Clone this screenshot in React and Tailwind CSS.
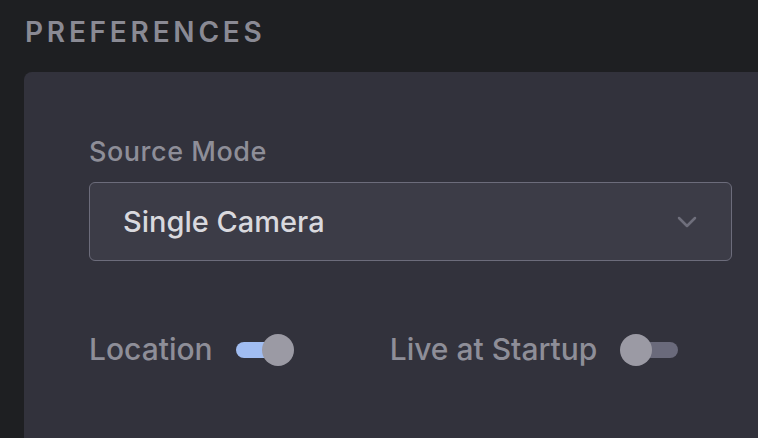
import React, { useState } from 'react';

function Toggle({ on, onChange }) {
  return (
    <button
      onClick={() => onChange(!on)}
      className="relative w-[58px] h-[32px] flex items-center"
    >
      <span className={`absolute left-0 right-0 h-[16px] rounded-full ${on ? 'bg-[#a1bdf1] mr-[2px]' : 'bg-[#6a6a7b] ml-[2px]'}`} />
      <span className={`absolute top-0 w-[32px] h-[32px] rounded-full bg-[#9b9aa4] ${on ? 'right-0' : 'left-0'}`} />
    </button>
  );
}

export default function App() {
  const [location, setLocation] = useState(true);
  const [live, setLive] = useState(false);

  return (
    <div
      className="w-[758px] h-[438px] overflow-hidden bg-[#1e1f22]"
      style={{ fontFamily: 'Inter, "Open Sans", sans-serif' }}
    >
      <h2 className="pl-[25px] pt-[14px] h-[72px] text-[28px] font-semibold tracking-[0.135em] text-[#8a8a94] leading-[36px]">
        PREFERENCES
      </h2>

      <div className="ml-[24px] w-[780px] h-[400px] rounded-[8px] bg-[#32323c] pl-[65px] pt-[63px]">
        <div className="text-[27px] font-medium tracking-[0.02em] text-[#8e8e98] leading-[34px]">Source Mode</div>

        <div className="mt-[13px] w-[643px] h-[79px] rounded-[6px] border border-[#6c6c7b] bg-[#3c3c47] flex items-center justify-between pl-[33px] pr-[34px]">
          <span className="text-[29px] font-medium text-[#d9d9de]">Single Camera</span>
          <svg width="20" height="12" viewBox="0 0 20 12" fill="none">
            <path d="M2 2l8 8 8-8" stroke="#6f6f7c" strokeWidth="2.5" strokeLinecap="round" strokeLinejoin="round" />
          </svg>
        </div>

        <div className="mt-[66px] flex items-center">
          <span className="text-[30px] font-medium text-[#8e8e98]">Location</span>
          <div className="ml-[23px]">
            <Toggle on={location} onChange={setLocation} />
          </div>
          <span className="ml-[96px] text-[30px] font-medium text-[#8e8e98]">Live at Startup</span>
          <div className="ml-[23px]">
            <Toggle on={live} onChange={setLive} />
          </div>
        </div>
      </div>
    </div>
  );
}
